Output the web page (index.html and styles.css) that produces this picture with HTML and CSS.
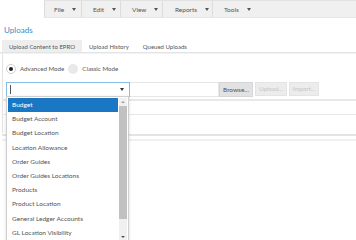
FILE: index.html
```html
<!DOCTYPE html>
<html>
<head>
<meta charset="utf-8">
<link rel="stylesheet" href="styles.css">
</head>
<body>
<div class="menubar">
  <div class="menu m-file">File<span class="caret"></span></div>
  <div class="menu m-edit">Edit<span class="caret"></span></div>
  <div class="menu m-view">View<span class="caret"></span></div>
  <div class="menu m-reports">Reports<span class="caret"></span></div>
  <div class="menu m-tools">Tools<span class="caret"></span></div>
</div>
<div class="title">Uploads</div>
<div class="tabs">
  <div class="tab active">Upload Content to EPRO</div>
  <div class="tab">Upload History</div>
  <div class="tab">Queued Uploads</div>
</div>
<div class="panel">
  <div class="modes">
    <span class="radio on"></span><span class="label">Advanced Mode</span>
    <span class="radio"></span><span class="label">Classic Mode</span>
  </div>
  <div class="inputs">
    <div class="combo"><span class="cursor"></span><span class="caret dark"></span></div>
    <div class="file"></div>
    <div class="btn">Browse...</div>
    <div class="btn disabled">Upload...</div>
    <div class="btn disabled">Import...</div>
  </div>
  <div class="grid">
    <div class="g1"></div>
    <div class="g2"></div>
    <div class="g3"></div>
  </div>
</div>
<div class="dropdown">
  <div class="list">
    <div class="item sel">Budget</div>
    <div class="item">Budget Account</div>
    <div class="item">Budget Location</div>
    <div class="item">Location Allowance</div>
    <div class="item">Order Guides</div>
    <div class="item">Order Guides Locations</div>
    <div class="item">Products</div>
    <div class="item">Product Location</div>
    <div class="item">General Ledger Accounts</div>
    <div class="item">GL Location Visibility</div>
  </div>
  <div class="scroll">
    <div class="arrow up"></div>
    <div class="thumb"></div>
    <div class="track"></div>
    <div class="arrow down"></div>
  </div>
</div>
</body>
</html>
```
FILE: styles.css
```css
* { box-sizing: border-box; }
html, body { margin: 0; padding: 0; background: #fff; }
body {
  width: 356px; height: 240px; overflow: hidden; position: relative;
  font-family: Lato, "Liberation Sans", sans-serif;
  font-size: 6.5px; color: #555;
}
.menubar {
  margin-left: 44px; height: 18px; background: #f0f0f0;
  border-top: 1px solid #e2e2e2; border-bottom: 1px solid #e6e6e6;
  display: flex; align-items: stretch;
}
.menu {
  display: flex; align-items: center; gap: 8px;
  padding-left: 10px; border-left: 1px solid #dcdcdc; color: #555;
}
.m-file { width: 37px; padding-left: 9px; }
.m-edit { width: 39px; padding-left: 11px; }
.m-view { width: 42px; padding-left: 11px; }
.m-reports { width: 50px; padding-left: 12px; }
.m-tools { width: 50px; padding-left: 11px; }
.caret {
  width: 0; height: 0; border-left: 2.5px solid transparent; border-right: 2.5px solid transparent;
  border-top: 3px solid #555;
}
.caret.dark { border-top-color: #333; }
.title {
  color: #3b8ac4; font-size: 8px; padding: 5px 0 0 4px; height: 22px; line-height: 14px;
}
.tabs {
  display: flex; align-items: stretch; height: 13px; font-size: 6px;
  border-bottom: 1px solid #e4e4e4; padding-left: 2px; box-shadow: 0 1px 0 #f2f2f2;
}
.tab { padding: 0 7px; display: flex; align-items: center; color: #555; }
.tab.active { background: #eeeeee; }
.panel { margin-left: 2px; border-left: 1px solid #e2e2e2; height: 80px; }
.modes { display: flex; align-items: center; height: 25px; padding: 6px 0 0 3px; font-size: 6.2px; }
.radio {
  width: 10px; height: 10px; border-radius: 50%; background: #e9e9e9;
  position: relative; margin-right: 4px;
}
.radio.on { background: #fff; border: 1px solid #cfcfcf; }
.radio.on::after {
  content: ""; position: absolute; left: 2px; top: 2px; width: 4px; height: 4px;
  border-radius: 50%; background: #222;
}
.label { margin-right: 4px; color: #555; }
.inputs { display: flex; align-items: center; height: 16px; padding-left: 3px; margin-top: 3px; }
.combo {
  width: 124px; height: 15px; border: 1px solid #86bde6; background: #fff;
  display: flex; align-items: center; justify-content: space-between; padding: 0 5px 0 3px;
}
.cursor { width: 1px; height: 9px; background: #555; }
.file { width: 89px; height: 15px; border: 1px solid #e6e6e6; border-left: none; background: #fff; }
.btn {
  height: 15px; background: #e2e2e2; border: 1px solid #d6d6d6; color: #555;
  display: flex; align-items: center; padding: 0 3px; margin-right: 2px;
}
.btn.disabled {
  background: #ececec; border-color: #e4e4e4; color: #c4c4c4; height: 14px; margin-top: -1px;
  font-size: 6.2px;
}
.grid { margin-left: -1px; }
.g1 { height: 2px; background: #e8e8e8; margin-top: 2px; }
.g2 { height: 1px; background: #e8e8e8; margin-top: 13px; }
.g3 { height: 2px; background: #e4e4e4; margin-top: 19px; box-shadow: 0 5px 0 0 #f0f0f0; }
.dropdown {
  position: absolute; left: 6px; top: 96px; width: 123px; height: 146px;
  border: 1px solid #cfcfcf; background: #fff; display: flex; padding: 1px 1px 0 1px;
  box-shadow: 0 1px 3px rgba(0,0,0,0.15);
}
.list { flex: 1; }
.item { height: 14.2px; line-height: 14.2px; padding-left: 4px; color: #555; white-space: nowrap; }
.item.sel { background: #1a77c4; color: #fff; }
.scroll { width: 8px; display: flex; flex-direction: column; background: #f0f0f0; margin-left: 1px; }
.arrow { height: 8px; position: relative; }
.arrow::after {
  content: ""; position: absolute; left: 2px; width: 0; height: 0;
  border-left: 2px solid transparent; border-right: 2px solid transparent;
}
.arrow.up::after { top: 3px; border-bottom: 2px solid #a0a0a0; }
.arrow.down::after { top: 3px; border-top: 2px solid #505050; }
.thumb { height: 113px; background: #c1c1c1; }
.track { flex: 1; }
```
